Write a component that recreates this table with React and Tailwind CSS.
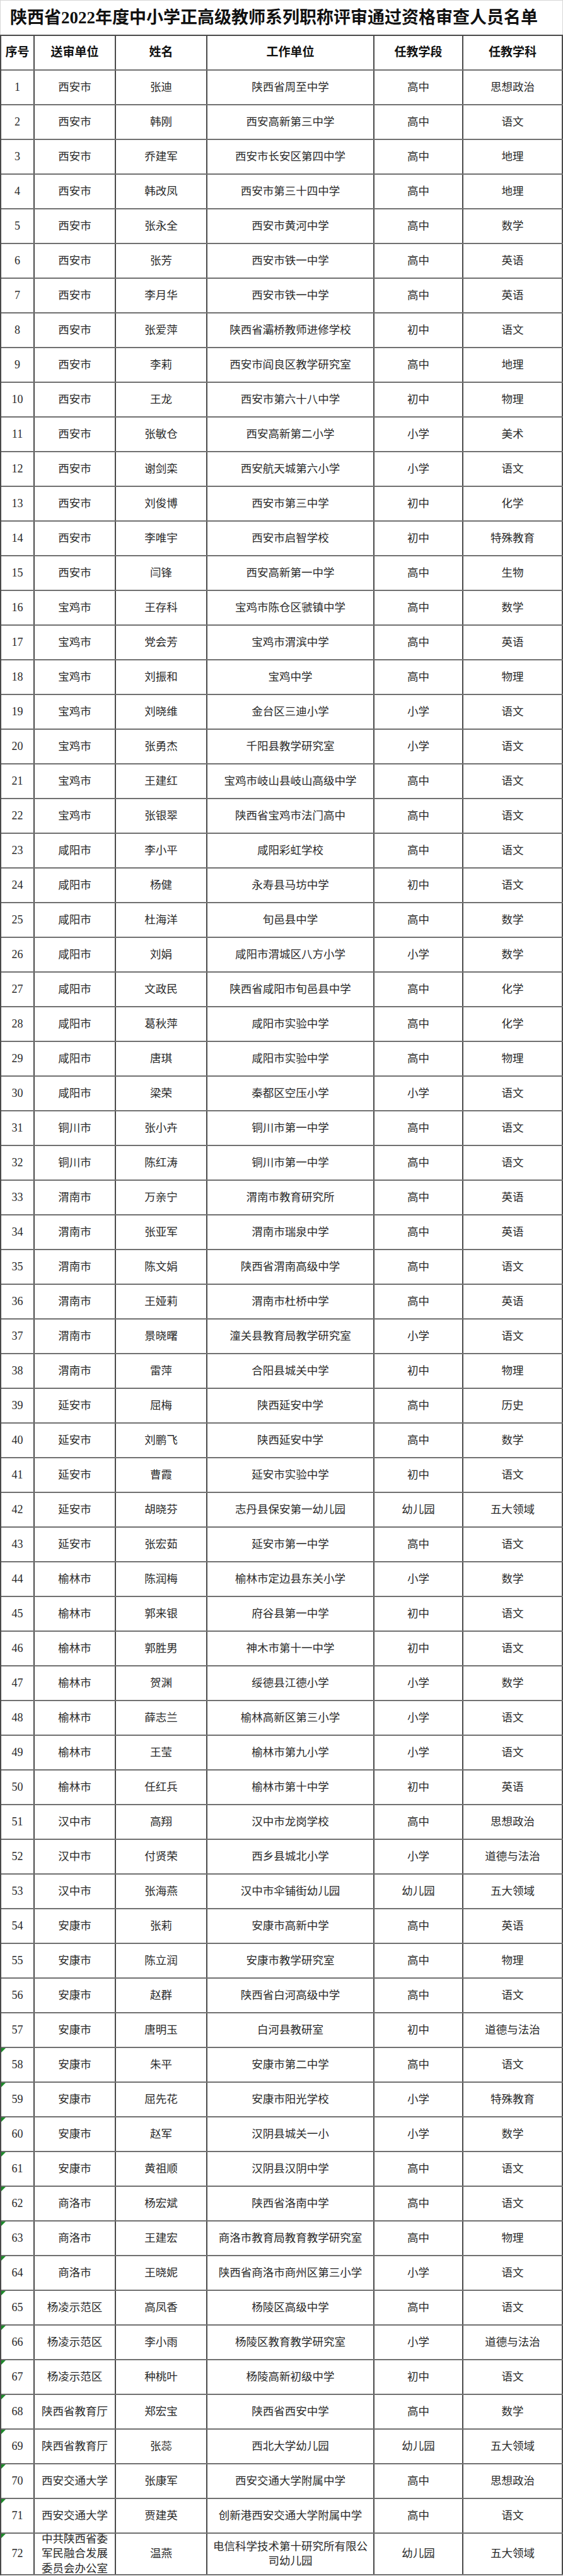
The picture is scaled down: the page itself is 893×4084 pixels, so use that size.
import React from "react";

const rows = [
  ["西安市", "张迪", "陕西省周至中学", "高中", "思想政治"],
  ["西安市", "韩刚", "西安高新第三中学", "高中", "语文"],
  ["西安市", "乔建军", "西安市长安区第四中学", "高中", "地理"],
  ["西安市", "韩改凤", "西安市第三十四中学", "高中", "地理"],
  ["西安市", "张永全", "西安市黄河中学", "高中", "数学"],
  ["西安市", "张芳", "西安市铁一中学", "高中", "英语"],
  ["西安市", "李月华", "西安市铁一中学", "高中", "英语"],
  ["西安市", "张爱萍", "陕西省灞桥教师进修学校", "初中", "语文"],
  ["西安市", "李莉", "西安市阎良区教学研究室", "高中", "地理"],
  ["西安市", "王龙", "西安市第六十八中学", "初中", "物理"],
  ["西安市", "张敏仓", "西安高新第二小学", "小学", "美术"],
  ["西安市", "谢剑栾", "西安航天城第六小学", "小学", "语文"],
  ["西安市", "刘俊博", "西安市第三中学", "初中", "化学"],
  ["西安市", "李唯宇", "西安市启智学校", "初中", "特殊教育"],
  ["西安市", "闫锋", "西安高新第一中学", "高中", "生物"],
  ["宝鸡市", "王存科", "宝鸡市陈仓区虢镇中学", "高中", "数学"],
  ["宝鸡市", "党会芳", "宝鸡市渭滨中学", "高中", "英语"],
  ["宝鸡市", "刘振和", "宝鸡中学", "高中", "物理"],
  ["宝鸡市", "刘晓维", "金台区三迪小学", "小学", "语文"],
  ["宝鸡市", "张勇杰", "千阳县教学研究室", "小学", "语文"],
  ["宝鸡市", "王建红", "宝鸡市岐山县岐山高级中学", "高中", "语文"],
  ["宝鸡市", "张银翠", "陕西省宝鸡市法门高中", "高中", "语文"],
  ["咸阳市", "李小平", "咸阳彩虹学校", "高中", "语文"],
  ["咸阳市", "杨健", "永寿县马坊中学", "初中", "语文"],
  ["咸阳市", "杜海洋", "旬邑县中学", "高中", "数学"],
  ["咸阳市", "刘娟", "咸阳市渭城区八方小学", "小学", "数学"],
  ["咸阳市", "文政民", "陕西省咸阳市旬邑县中学", "高中", "化学"],
  ["咸阳市", "葛秋萍", "咸阳市实验中学", "高中", "化学"],
  ["咸阳市", "唐琪", "咸阳市实验中学", "高中", "物理"],
  ["咸阳市", "梁荣", "秦都区空压小学", "小学", "语文"],
  ["铜川市", "张小卉", "铜川市第一中学", "高中", "语文"],
  ["铜川市", "陈红涛", "铜川市第一中学", "高中", "语文"],
  ["渭南市", "万亲宁", "渭南市教育研究所", "高中", "英语"],
  ["渭南市", "张亚军", "渭南市瑞泉中学", "高中", "英语"],
  ["渭南市", "陈文娟", "陕西省渭南高级中学", "高中", "语文"],
  ["渭南市", "王娅莉", "渭南市杜桥中学", "高中", "英语"],
  ["渭南市", "景晓曙", "潼关县教育局教学研究室", "小学", "语文"],
  ["渭南市", "雷萍", "合阳县城关中学", "初中", "物理"],
  ["延安市", "屈梅", "陕西延安中学", "高中", "历史"],
  ["延安市", "刘鹏飞", "陕西延安中学", "高中", "数学"],
  ["延安市", "曹霞", "延安市实验中学", "初中", "语文"],
  ["延安市", "胡晓芬", "志丹县保安第一幼儿园", "幼儿园", "五大领域"],
  ["延安市", "张宏茹", "延安市第一中学", "高中", "语文"],
  ["榆林市", "陈润梅", "榆林市定边县东关小学", "小学", "数学"],
  ["榆林市", "郭来银", "府谷县第一中学", "初中", "语文"],
  ["榆林市", "郭胜男", "神木市第十一中学", "初中", "语文"],
  ["榆林市", "贺渊", "绥德县江德小学", "小学", "数学"],
  ["榆林市", "薛志兰", "榆林高新区第三小学", "小学", "语文"],
  ["榆林市", "王莹", "榆林市第九小学", "小学", "语文"],
  ["榆林市", "任红兵", "榆林市第十中学", "初中", "英语"],
  ["汉中市", "高翔", "汉中市龙岗学校", "高中", "思想政治"],
  ["汉中市", "付贤荣", "西乡县城北小学", "小学", "道德与法治"],
  ["汉中市", "张海燕", "汉中市伞铺街幼儿园", "幼儿园", "五大领域"],
  ["安康市", "张莉", "安康市高新中学", "高中", "英语"],
  ["安康市", "陈立润", "安康市教学研究室", "高中", "物理"],
  ["安康市", "赵群", "陕西省白河高级中学", "高中", "语文"],
  ["安康市", "唐明玉", "白河县教研室", "初中", "道德与法治"],
  ["安康市", "朱平", "安康市第二中学", "高中", "语文"],
  ["安康市", "屈先花", "安康市阳光学校", "小学", "特殊教育"],
  ["安康市", "赵军", "汉阴县城关一小", "小学", "数学"],
  ["安康市", "黄祖顺", "汉阴县汉阴中学", "高中", "语文"],
  ["商洛市", "杨宏斌", "陕西省洛南中学", "高中", "语文"],
  ["商洛市", "王建宏", "商洛市教育局教育教学研究室", "高中", "物理"],
  ["商洛市", "王晓妮", "陕西省商洛市商州区第三小学", "小学", "语文"],
  ["杨凌示范区", "高凤香", "杨陵区高级中学", "高中", "语文"],
  ["杨凌示范区", "李小雨", "杨陵区教育教学研究室", "小学", "道德与法治"],
  ["杨凌示范区", "种桃叶", "杨陵高新初级中学", "初中", "语文"],
  ["陕西省教育厅", "郑宏宝", "陕西省西安中学", "高中", "数学"],
  ["陕西省教育厅", "张蕊", "西北大学幼儿园", "幼儿园", "五大领域"],
  ["西安交通大学", "张康军", "西安交通大学附属中学", "高中", "思想政治"],
  ["西安交通大学", "贾建英", "创新港西安交通大学附属中学", "高中", "语文"],
  ["中共陕西省委军民融合发展委员会办公室", "温燕", "电信科学技术第十研究所有限公司幼儿园", "幼儿园", "五大领域"],
];

const gridCols = "grid grid-cols-[53px_129px_145px_265px_141px_1fr]";
const cell =
  "flex items-center justify-center text-center overflow-hidden border-r-2 border-r-[#4a4a4a]";

export default function App() {
  return (
    <div
      className="w-[893px] bg-white text-[#2a2a2a]"
      style={{ fontFamily: "'Liberation Serif', 'Noto Sans CJK SC', serif" }}
    >
      <div className="h-[55px] border-t border-l border-r border-[#d6d6d6] flex items-center pl-[15px] text-[27px] font-bold text-[#111] whitespace-nowrap">
        陕西省2022年度中小学正高级教师系列职称评审通过资格审查人员名单
      </div>
      <div className="border-t-2 border-l-2 border-[#4a4a4a]">
        <div className={`${gridCols} h-[55px] border-b-2 border-b-[#707070] text-[19px] font-bold text-[#111]`}>
          <div className={`${cell} whitespace-nowrap`}>序号</div>
          <div className={`${cell} px-2`}>送审单位</div>
          <div className={`${cell} px-2`}>姓名</div>
          <div className={`${cell} px-2`}>工作单位</div>
          <div className={`${cell} px-2`}>任教学段</div>
          <div className={`${cell} px-2`}>任教学科</div>
        </div>
        {rows.map((r, i) => {
          const n = i + 1;
          const last = n === 72;
          return (
            <div
              key={n}
              className={`${gridCols} ${last ? "h-[66px] leading-[23.5px]" : "h-[55px]"} border-b-2 border-b-[#707070] text-[17.5px]`}
            >
              <div className={`${cell} relative text-[18px]`}>
                {n >= 58 && (
                  <span className="absolute top-0 left-0 w-0 h-0 border-t-[7px] border-r-[7px] border-t-[#1d8a2a] border-r-transparent" />
                )}
                {n}
              </div>
              <div className={`${cell} px-2`}>{r[0]}</div>
              <div className={`${cell} px-2`}>{r[1]}</div>
              <div className={`${cell} px-1`}>{r[2]}</div>
              <div className={`${cell} px-2`}>{r[3]}</div>
              <div className={`${cell} px-2`}>{r[4]}</div>
            </div>
          );
        })}
      </div>
    </div>
  );
}
